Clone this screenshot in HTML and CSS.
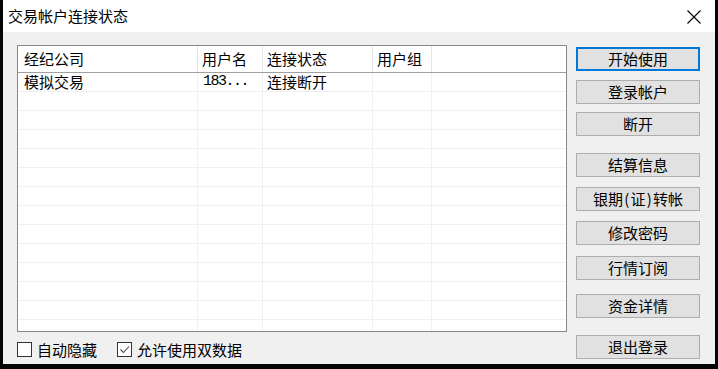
FILE: index.html
```html
<!DOCTYPE html>
<html lang="zh-CN">
<head>
<meta charset="utf-8">
<title>交易帐户连接状态</title>
<link rel="stylesheet" href="styles.css">
</head>
<body>
<div class="dialog">
  <div class="titlebar">
    <span class="title">交易帐户连接状态</span>
    <span class="close">
      <svg width="14" height="14" viewBox="0 0 14 14"><path d="M0.5 0.5 L13.5 13.5 M13.5 0.5 L0.5 13.5" stroke="#000" stroke-width="1.1" fill="none"/></svg>
    </span>
  </div>
  <div class="body">
    <div class="main">
      <div class="listview">
        <div class="row head">
          <div class="c c1">经纪公司</div><div class="c c2">用户名</div><div class="c c3">连接状态</div><div class="c c4">用户组</div><div class="c c5"></div>
        </div>
        <div class="row">
          <div class="c c1">模拟交易</div><div class="c c2 num">183...</div><div class="c c3">连接断开</div><div class="c c4"></div><div class="c c5"></div>
        </div>
        <div class="row"><div class="c c1"></div><div class="c c2"></div><div class="c c3"></div><div class="c c4"></div><div class="c c5"></div></div>
        <div class="row"><div class="c c1"></div><div class="c c2"></div><div class="c c3"></div><div class="c c4"></div><div class="c c5"></div></div>
        <div class="row"><div class="c c1"></div><div class="c c2"></div><div class="c c3"></div><div class="c c4"></div><div class="c c5"></div></div>
        <div class="row"><div class="c c1"></div><div class="c c2"></div><div class="c c3"></div><div class="c c4"></div><div class="c c5"></div></div>
        <div class="row"><div class="c c1"></div><div class="c c2"></div><div class="c c3"></div><div class="c c4"></div><div class="c c5"></div></div>
        <div class="row"><div class="c c1"></div><div class="c c2"></div><div class="c c3"></div><div class="c c4"></div><div class="c c5"></div></div>
        <div class="row"><div class="c c1"></div><div class="c c2"></div><div class="c c3"></div><div class="c c4"></div><div class="c c5"></div></div>
        <div class="row"><div class="c c1"></div><div class="c c2"></div><div class="c c3"></div><div class="c c4"></div><div class="c c5"></div></div>
        <div class="row"><div class="c c1"></div><div class="c c2"></div><div class="c c3"></div><div class="c c4"></div><div class="c c5"></div></div>
        <div class="row"><div class="c c1"></div><div class="c c2"></div><div class="c c3"></div><div class="c c4"></div><div class="c c5"></div></div>
        <div class="row"><div class="c c1"></div><div class="c c2"></div><div class="c c3"></div><div class="c c4"></div><div class="c c5"></div></div>
        <div class="row"><div class="c c1"></div><div class="c c2"></div><div class="c c3"></div><div class="c c4"></div><div class="c c5"></div></div>
        <div class="row"><div class="c c1"></div><div class="c c2"></div><div class="c c3"></div><div class="c c4"></div><div class="c c5"></div></div>
      </div>
      <div class="checks">
        <label class="check"><span class="box"></span><span class="lbl">自动隐藏</span></label>
        <label class="check second"><span class="box"><svg width="13" height="13" viewBox="0 0 13 13"><path d="M2.5 6.5 L5.5 9.5 L11 3.5" stroke="#4a4a4a" stroke-width="1.1" fill="none"/></svg></span><span class="lbl">允许使用双数据</span></label>
      </div>
    </div>
    <div class="buttons">
      <div class="btn default">开始使用</div>
      <div class="btn">登录帐户</div>
      <div class="btn">断开</div>
      <div class="btn">结算信息</div>
      <div class="btn">银期<span class="hw">(</span>证<span class="hw">)</span>转帐</div>
      <div class="btn">修改密码</div>
      <div class="btn">行情订阅</div>
      <div class="btn">资金详情</div>
      <div class="btn">退出登录</div>
    </div>
  </div>
</div>
</body>
</html>
```
FILE: styles.css
```css
html, body {
  margin: 0;
  padding: 0;
  background: #050505;
  width: 718px;
  height: 369px;
  overflow: hidden;
}

body {
  font-family: "Noto Sans CJK SC", "Noto Sans", sans-serif;
  font-size: 15px;
  color: #000;
}

.dialog {
  margin-left: 3px;
  width: 712px;
  height: 364px;
  background: #f0f0f0;
  display: flex;
  flex-direction: column;
}

.titlebar {
  height: 32px;
  background: #fff;
  display: flex;
  align-items: center;
  justify-content: space-between;
  padding-left: 5px;
}

.title {
  font-size: 15px;
  line-height: 20px;
}

.close {
  width: 14px;
  height: 14px;
  margin-right: 14px;
  margin-top: 1px;
  display: flex;
}

.body {
  display: flex;
  padding: 13px 0 0 14px;
}

.main {
  width: 550px;
  display: flex;
  flex-direction: column;
}

.listview {
  width: 550px;
  height: 287px;
  box-sizing: border-box;
  border: 1px solid #828790;
  background: #fff;
  overflow: hidden;
}

.row {
  display: flex;
  height: 19px;
  box-sizing: border-box;
  border-bottom: 1px solid #f0f0f0;
}

.row.head {
  height: 27px;
  border-bottom: 1px solid #a0a0a0;
}

.c {
  box-sizing: border-box;
  border-right: 1px solid #f0f0f0;
  padding-left: 4px;
  line-height: 18px;
  white-space: nowrap;
}

.head .c {
  line-height: 26px;
  border-right-color: #e5e5e5;
}

.c1 { width: 180px; padding-left: 6px; }
.c2 { width: 65px; }
.c3 { width: 110px; }
.c4 { width: 59px; }
.c5 { flex: 1; border-right: none; }

.num {
  font-family: "Liberation Mono", "DejaVu Sans Mono", monospace;
  font-size: 15px;
  letter-spacing: -1.5px;
  padding-left: 5px;
}

.checks {
  display: flex;
  align-items: center;
  margin-top: 10px;
  height: 15px;
}

.check {
  display: flex;
  align-items: center;
}

.check.second {
  margin-left: 20px;
}

.box {
  width: 15px;
  height: 15px;
  box-sizing: border-box;
  border: 1px solid #333;
  background: #fff;
  display: flex;
  align-items: center;
  justify-content: center;
}

.lbl {
  margin-left: 5px;
  line-height: 18px;
}

.buttons {
  margin-left: 9px;
  padding-top: 2px;
  display: flex;
  flex-direction: column;
}

.btn {
  width: 124px;
  height: 24px;
  box-sizing: border-box;
  border: 1px solid #adadad;
  background: #e1e1e1;
  text-align: center;
  line-height: 21px;
  white-space: nowrap;
}

.btn.default {
  border: 2px solid #0078d7;
  line-height: 19px;
}

.hw {
  display: inline-block;
  width: 7.5px;
  text-align: center;
}

.btn:nth-child(2) { margin-top: 9px; }
.btn:nth-child(3) { margin-top: 8px; }
.btn:nth-child(4) { margin-top: 17px; }
.btn:nth-child(5) { margin-top: 10px; }
.btn:nth-child(6) { margin-top: 10px; }
.btn:nth-child(7) { margin-top: 11px; }
.btn:nth-child(8) { margin-top: 14px; }
.btn:nth-child(9) { margin-top: 17px; }
```
